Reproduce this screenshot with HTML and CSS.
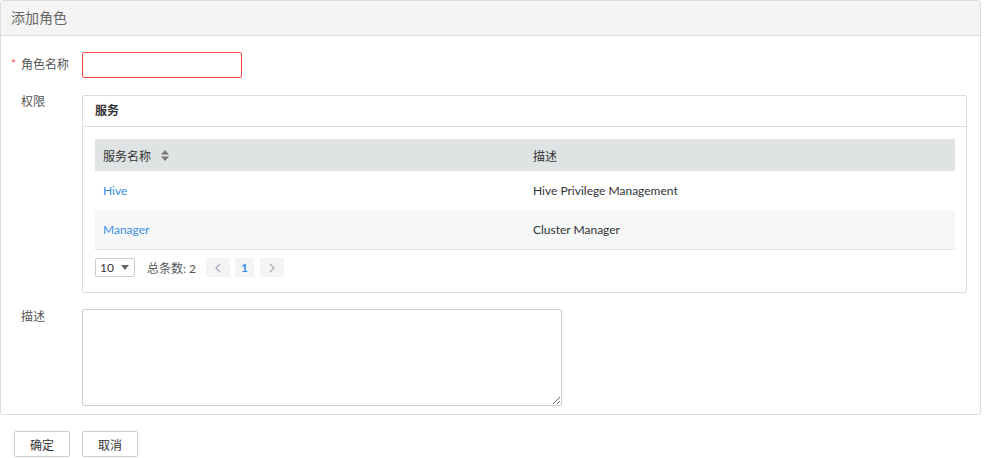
FILE: index.html
```html
<!DOCTYPE html>
<html>
<head>
<meta charset="utf-8">
<link rel="stylesheet" href="styles.css">
</head>
<body>
<div class="panel">
  <div class="panel-head">添加角色</div>
  <div class="panel-body">
    <div class="row row-name">
      <label class="lbl"><span class="req">*</span>角色名称</label>
      <input class="inp" type="text">
    </div>
    <div class="row row-perm">
      <label class="lbl">权限</label>
      <div class="card">
        <div class="card-head">服务</div>
        <div class="card-body">
          <div class="tbl">
            <div class="tr th">
              <div class="td">服务名称
                <svg class="sort" width="8" height="11" viewBox="0 0 8 11"><path d="M4 0 L8 4.5 H0 Z M0 6.5 H8 L4 11 Z" fill="#777"/></svg>
              </div>
              <div class="td">描述</div>
            </div>
            <div class="tr">
              <div class="td"><a class="lnk">Hive</a></div>
              <div class="td">Hive Privilege Management</div>
            </div>
            <div class="tr alt">
              <div class="td"><a class="lnk">Manager</a></div>
              <div class="td">Cluster Manager</div>
            </div>
          </div>
          <div class="pager">
            <div class="sel">10
              <svg class="caret" width="8" height="5" viewBox="0 0 8 5"><path d="M0 0 H8 L4 5 Z" fill="#666"/></svg>
            </div>
            <span class="total">总条数: 2</span>
            <span class="pbtn"><svg width="6" height="10" viewBox="0 0 6 10"><path d="M5 1 L1 5 L5 9" fill="none" stroke="#aab" stroke-width="1.3"/></svg></span>
            <span class="pbtn cur">1</span>
            <span class="pbtn"><svg width="6" height="10" viewBox="0 0 6 10"><path d="M1 1 L5 5 L1 9" fill="none" stroke="#aab" stroke-width="1.3"/></svg></span>
          </div>
        </div>
      </div>
    </div>
    <div class="row row-desc">
      <label class="lbl">描述</label>
      <textarea class="ta"></textarea>
    </div>
  </div>
</div>
<div class="actions">
  <button class="btn">确定</button>
  <button class="btn">取消</button>
</div>
</body>
</html>
```

FILE: styles.css
```css
* { box-sizing: border-box; }
body {
  margin: 0;
  font-family: Lato, "Noto Sans CJK SC", sans-serif;
  font-size: 12px;
  color: #333;
  background: #fff;
}
.panel {
  width: 981px;
  border: 1px solid #ddd;
  border-radius: 3px;
}
.panel-head {
  height: 35px;
  background: #f4f4f4;
  border-bottom: 1px solid #ddd;
  padding-left: 10px;
  font-size: 14px;
  color: #666;
  line-height: 34px;
}
.panel-body {
  padding: 16px 0 8px 0;
}
.row {
  display: flex;
  align-items: flex-start;
}
.lbl {
  width: 81px;
  flex: none;
  padding-left: 20px;
  color: #555;
  position: relative;
  line-height: 16px;
}
.req {
  position: absolute;
  left: 10px;
  top: 4px;
  color: #f44;
}
.row-name .lbl { padding-top: 5px; }
.row-perm { margin-top: 17px; }
.row-perm .lbl { margin-top: -1px; }
.row-desc { margin-top: 16px; }
.inp {
  width: 160px;
  height: 26px;
  border: 1px solid #f44;
  border-radius: 2px;
  outline: none;
  padding: 0 6px;
  font: inherit;
}
.card {
  width: 885px;
  border: 1px solid #ddd;
  border-radius: 2px;
}
.card-head {
  height: 31px;
  border-bottom: 1px solid #ddd;
  padding-left: 12px;
  line-height: 30px;
  font-weight: bold;
  color: #333;
}
.card-body {
  padding: 12px 11px 15px 12px;
}
.tbl {
  border-bottom: 1px solid #e3e3e3;
}
.tr {
  display: flex;
  height: 39px;
  align-items: center;
}
.tr.th {
  height: 32px;
  background: #e0e3e4;
  color: #333;
}
.tr.alt { background: #f6f8f8; }
.td {
  flex: 1;
  padding-left: 8px;
  display: flex;
  align-items: center;
}
.sort { margin-left: 10px; }
.lnk { color: #3a8ee6; text-decoration: none; }
.pager {
  display: flex;
  align-items: center;
  margin-top: 8px;
  height: 19px;
}
.sel {
  width: 40px;
  height: 19px;
  border: 1px solid #ccc;
  border-radius: 2px;
  display: flex;
  align-items: center;
  justify-content: space-between;
  padding: 0 5px 0 4px;
  color: #333;
}
.total {
  margin-left: 12px;
  color: #555;
}
.pbtn {
  width: 24px;
  height: 19px;
  background: #f3f5f5;
  display: flex;
  align-items: center;
  justify-content: center;
  margin-left: 6px;
}
.total + .pbtn { margin-left: 10px; }
.pbtn.cur {
  width: 19px;
  color: #3a8ee6;
  font-weight: bold;
  margin-left: 5px;
}
.ta {
  width: 480px;
  height: 97px;
  border: 1px solid #ccc;
  border-radius: 2px;
  font: inherit;
  margin: 0;
  display: block;
}
.actions {
  display: flex;
  gap: 12px;
  padding: 16px 0 0 14px;
}
.btn {
  width: 56px;
  height: 26px;
  border: 1px solid #ccc;
  border-radius: 2px;
  background: #fff;
  font: inherit;
  color: #333;
  padding: 0;
}
```
